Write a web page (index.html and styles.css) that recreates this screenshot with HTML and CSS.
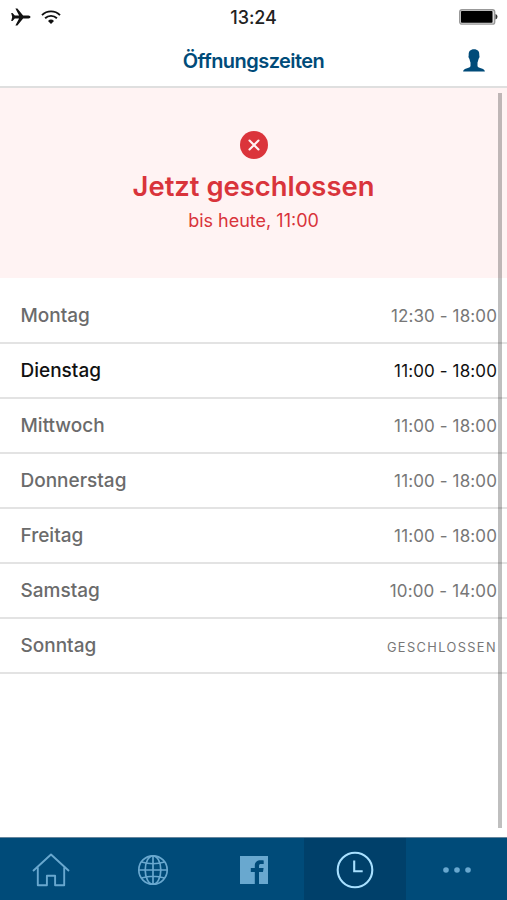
FILE: index.html
```html
<!DOCTYPE html>
<html lang="de">

<head>
    <meta charset="UTF-8">
    <meta name="viewport" content="width=device-width, initial-scale=1.0">
    <title>Öffnungszeiten</title>
    <link rel="stylesheet" href="styles.css">
</head>

<body>
    <div class="status-bar">
        <div class="status-icons">
            <svg width="20" height="18" viewBox="0 0 20 18">
                <path d="M0.2 5h1.3l2.3 2.5h4.3L4.4 0.4h2l5.7 7.1h5.4q2 .3 2 1.5t-2 1.5h-5.4l-5.7 7.1H4.4l3.7-7.1H3.8L1.5 13H0.2l1-4z" fill="#111" />
            </svg>
            <svg width="20" height="16" viewBox="0 0 20 16" fill="none" stroke="#111" stroke-width="1.9">
                <path d="M1 6.1a12.8 12.8 0 0 1 18 0M4.1 9.3a8.4 8.4 0 0 1 11.8 0" />
                <path d="M7 11.9a4.4 4.4 0 0 1 6 0l-3 3z" fill="#111" stroke="none" />
            </svg>
        </div>
        <span class="clock">13:24</span>
        <svg class="battery" width="39" height="16" viewBox="0 0 39 16">
            <rect x=".7" y=".7" width="35" height="14.4" rx="2.2" fill="#ddd" stroke="#999" stroke-width="1.4" />
            <rect x="2" y="2" width="31.5" height="11.8" rx=".8" fill="#000" />
            <path d="M36.5 5q2 .8 2 2.8t-2 2.8z" fill="#333" />
        </svg>
    </div>

    <header>
        <h1>Öffnungszeiten</h1>
        <svg class="user-icon" width="22" height="23" viewBox="0 0 22 23">
            <path d="M11 .3c3.7 0 5.5 2.200 5.300 5.600 0 .8.300 1.100.2 2.100-.1 1-.7 1.200-1 2.200-.4 1.700-.7 2.500-1 3.300v3.400c.3 1.500 2 1.800 4.200 2.500 2 .6 3 1.500 3.200 3.100H.1c.2-1.600 1.200-2.500 3.200-3.100 2.200-.7 3.900-1 4.200-2.500v-3.400c-.3-.8-.6-1.600-1-3.300-.3-1-.9-1.200-1-2.200-.1-1 .2-1.300.2-2.100C5.500 2.500 7.300.3 11 .3z" fill="#004b79" />
        </svg>
    </header>

    <main>
        <section class="current-state">
            <svg width="28" height="28" viewBox="0 0 28 28">
                <circle cx="14" cy="14" r="14" fill="#db343b" />
                <path d="M9.5 9.5l9 9M18.5 9.5l-9 9" stroke="#fff3f3" stroke-width="2.1" stroke-linecap="round" />
            </svg>
            <h2>Jetzt geschlossen</h2>
            <p>bis heute, 11:00</p>
        </section>

        <ul class="hours">
            <li><span class="day">Montag</span><span class="time">12:30 - 18:00</span></li>
            <li class="today"><span class="day">Dienstag</span><span class="time">11:00 - 18:00</span></li>
            <li><span class="day">Mittwoch</span><span class="time">11:00 - 18:00</span></li>
            <li><span class="day">Donnerstag</span><span class="time">11:00 - 18:00</span></li>
            <li><span class="day">Freitag</span><span class="time">11:00 - 18:00</span></li>
            <li><span class="day">Samstag</span><span class="time">10:00 - 14:00</span></li>
            <li><span class="day">Sonntag</span><span class="time closed">Geschlossen</span></li>
        </ul>
        <div class="scrollbar"></div>
    </main>

    <nav>
        <a class="tab">
            <svg width="38" height="34" viewBox="0 0 38 34" fill="none" stroke="currentColor" stroke-width="1.9">
                <path d="M1 18L19 1.5 37 18M5.8 14.5v17.8h9.1v-9.5h8.2v9.5h9.1V14.5" stroke-linejoin="round" />
            </svg>
        </a>
        <a class="tab">
            <svg width="32" height="32" viewBox="0 0 32 32" fill="none" stroke="currentColor" stroke-width="1.7">
                <circle cx="16" cy="16" r="14.2" />
                <ellipse cx="16" cy="16" rx="7.8" ry="14.2" />
                <path d="M16 2v28M2 16h28M4.5 8q11.5 3.5 23 0M4.5 24q11.5-3.5 23 0" />
            </svg>
        </a>
        <a class="tab">
            <svg width="28" height="28" viewBox="0 0 28 28">
                <path d="M0 0h28v28h-9V16.1h4l.6-4.1H19V10c0-1.3.6-1.9 2-1.9h2.7V4.5c-.7-.1-1.7-.2-2.9-.2-3.9 0-6 1.900-6 5.400V12h-4v4.100h4V28H0z" fill="currentColor" />
            </svg>
        </a>
        <a class="tab active">
            <svg width="38" height="38" viewBox="0 0 38 38" fill="none" stroke="currentColor" stroke-width="2.1">
                <circle cx="19" cy="19" r="17.3" />
                <path d="M18.2 9.6v10.700h8.500" />
            </svg>
        </a>
        <a class="tab">
            <svg width="30" height="8" viewBox="0 0 30 8" fill="currentColor">
                <circle cx="4" cy="4" r="2.8" />
                <circle cx="15" cy="4" r="2.8" />
                <circle cx="26" cy="4" r="2.8" />
            </svg>
        </a>
    </nav>
</body>

</html>
```
FILE: styles.css
```css
:root {
    --primary-color: #004b79;
    --active-color: #00406a;
    --danger-color: #d9343b;
    --line-color: #dfdfdf;
}

* {
    margin: 0;
    padding: 0;
    box-sizing: border-box;
}

body {
    height: 100vh;
    display: flex;
    flex-direction: column;
    background: #fff;
    color: #6b6b6b;
    font-family: 'Inter', sans-serif;
    overflow: hidden;
}

svg {
    display: block;
}

.status-bar {
    height: 34px;
    display: grid;
    grid-template-columns: 1fr auto 1fr;
    align-items: center;
    padding: 0 9px 0 11px;
}

.status-icons {
    display: flex;
    align-items: center;
    gap: 10px;
}

.clock {
    padding-right: 2px;
    color: #222;
    font-size: 18px;
    font-weight: 500;
    letter-spacing: -0.1px;
}

.battery {
    justify-self: end;
}

header {
    height: 54px;
    display: grid;
    grid-template-columns: 1fr auto 1fr;
    align-items: center;
    padding: 0 22px;
    border-bottom: 2px solid var(--line-color);
}

header h1 {
    grid-column: 2;
    padding-top: 2px;
    color: var(--primary-color);
    font-size: 20px;
    font-weight: 600;
    letter-spacing: -0.55px;
}

.user-icon {
    justify-self: end;
}

main {
    flex: 1;
    position: relative;
}

.current-state {
    height: 190px;
    display: flex;
    flex-direction: column;
    align-items: center;
    padding-top: 43px;
    background: #fff3f3;
    color: var(--danger-color);
}

.current-state h2 {
    margin-top: 10px;
    font-size: 27.4px;
    line-height: 34px;
    font-weight: 600;
}

.current-state p {
    margin-top: 6px;
    font-size: 18px;
    line-height: 24px;
}

.hours {
    list-style: none;
    padding-top: 11px;
}

.hours li {
    height: 55px;
    display: flex;
    justify-content: space-between;
    align-items: center;
    padding: 0 10px 0 20.5px;
    border-bottom: 2px solid #e3e3e3;
}

.day {
    font-size: 19px;
    font-weight: 500;
}

.time {
    padding-top: 1px;
    font-size: 17px;
    letter-spacing: 0.12px;
    color: #777;
}

.today .day,
.today .time {
    color: #111;
}

.closed {
    padding-top: 4px;
    font-size: 12.8px;
    letter-spacing: 1.4px;
    text-transform: uppercase;
}

.scrollbar {
    position: absolute;
    top: 5px;
    right: 5px;
    bottom: 9px;
    width: 4px;
    background: rgba(0, 0, 0, 0.25);
}

nav {
    height: 63px;
    display: grid;
    grid-template-columns: repeat(5, 1fr);
    background: var(--primary-color);
    border-top: 1px solid #66869d;
}

.tab {
    display: flex;
    justify-content: center;
    align-items: center;
    padding: 2px 0 0 1px;
    color: #69a8cf;
}

.tab.active {
    background: var(--active-color);
    color: #a8e0ff;
}
```
